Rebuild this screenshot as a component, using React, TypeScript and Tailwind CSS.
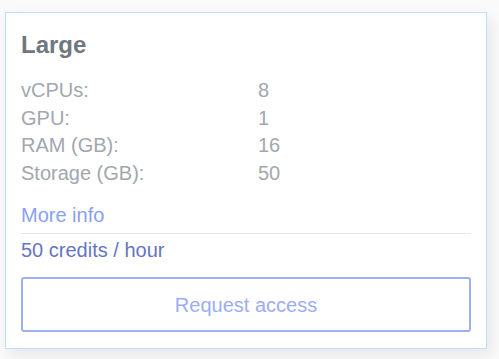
import React from "react";

const SPECS = [
  { label: "vCPUs:", value: "8" },
  { label: "GPU:", value: "1" },
  { label: "RAM (GB):", value: "16" },
  { label: "Storage (GB):", value: "50" },
];

export default function App() {
  return (
    <div
      className="min-h-[359px] w-[499px] bg-[#fafafa] pl-[5px] pt-[12px]"
      style={{ fontFamily: '"Liberation Sans", Arial, sans-serif' }}
    >
      <div className="w-[482px] border border-[#c3dcfb] bg-white px-[15px] pt-[16px] pb-[16px] shadow-[4px_6px_14px_rgba(0,0,0,0.08)]">
        {/* Plan title */}
        <h3 className="mb-4 text-2xl font-bold leading-8 text-[#71767e]">Large</h3>

        {/* Specs */}
        <div className="grid grid-cols-[237px_1fr] text-[20px] leading-[27.5px] text-[#a3a7ae]">
          {SPECS.map((s) => (
            <React.Fragment key={s.label}>
              <span>{s.label}</span>
              <span>{s.value}</span>
            </React.Fragment>
          ))}
        </div>

        <a className="mt-[15px] block text-[20px] leading-[27.5px] text-[#8aa0f2]">More info</a>
        <div className="mt-[3px] h-px bg-[#e6e8ec]" />
        <p className="mt-[3px] text-[20px] leading-[27.5px] text-[#6674c4]">50 credits / hour</p>

        <button className="mt-[13px] flex h-[55px] w-full items-center justify-center rounded-[3px] border-2 border-[#9db0f3] text-[20px] text-[#9cadf2]">
          Request access
        </button>
      </div>
    </div>
  );
}
